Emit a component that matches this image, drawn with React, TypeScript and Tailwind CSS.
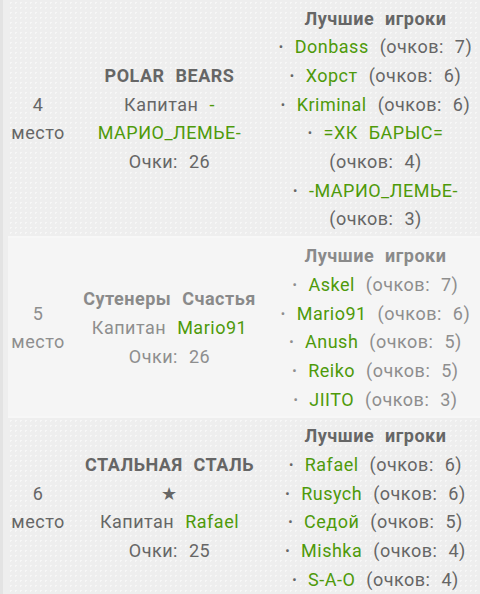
import React from 'react'

type Player = { name: string; pts: number; wrap?: boolean }
type Team = {
  place: number
  name: string
  star?: boolean
  captain: string
  captainWrap?: boolean
  points: number
  players: Player[]
  dim?: boolean
}

const teams: Team[] = [
  {
    place: 4,
    name: 'POLAR BEARS',
    captain: '-МАРИО_ЛЕМЬЕ-',
    captainWrap: true,
    points: 26,
    players: [
      { name: 'Donbass', pts: 7 },
      { name: 'Хорст', pts: 6 },
      { name: 'Kriminal', pts: 6 },
      { name: '=ХК БАРЫС=', pts: 4, wrap: true },
      { name: '-МАРИО_ЛЕМЬЕ-', pts: 3, wrap: true },
    ],
  },
  {
    place: 5,
    name: 'Сутенеры Счастья',
    captain: 'Mario91',
    points: 26,
    dim: true,
    players: [
      { name: 'Askel', pts: 7 },
      { name: 'Mario91', pts: 6 },
      { name: 'Anush', pts: 5 },
      { name: 'Reiko', pts: 5 },
      { name: 'JIITO', pts: 3 },
    ],
  },
  {
    place: 6,
    name: 'СТАЛЬНАЯ СТАЛЬ',
    star: true,
    captain: 'Rafael',
    points: 25,
    players: [
      { name: 'Rafael', pts: 6 },
      { name: 'Rusych', pts: 6 },
      { name: 'Седой', pts: 5 },
      { name: 'Mishka', pts: 4 },
      { name: 'S-A-O', pts: 4 },
    ],
  },
]

const dotted =
  'bg-[#eeeeee] bg-[radial-gradient(#f7f7f7_1px,transparent_1px)] bg-[size:5px_5px]'

function TeamRow({ team }: { team: Team }) {
  const text = team.dim ? 'text-[#8e8e8e]' : 'text-[#666666]'
  const head = team.dim ? 'text-[#8a8a8a]' : 'text-[#666666]'
  const bg = team.dim ? 'bg-[#f5f5f5]' : dotted

  return (
    <div className={`flex shrink-0 items-center pt-[4.5px] pb-[1.5px] ${bg} ${text}`}>
      <div className="w-[60px] shrink-0 text-center">
        <div>{team.place}</div>
        <div>место</div>
      </div>

      <div className="w-[203px] shrink-0 text-center">
        <div className={`font-bold ${head}`}>{team.name}</div>
        {team.star && <div>★</div>}
        {team.captainWrap ? (
          <>
            <div>
              Капитан <span className="text-[#4e9a0a]">-</span>
            </div>
            <div className="text-[#4e9a0a]">{team.captain.slice(1)}</div>
          </>
        ) : (
          <div>
            Капитан <span className="text-[#4e9a0a]">{team.captain}</span>
          </div>
        )}
        <div>Очки: {team.points}</div>
      </div>

      <div className="flex-1 text-center">
        <div className={`font-bold ${head}`}>Лучшие игроки</div>
        {team.players.map((p) => (
          <React.Fragment key={p.name}>
            <div>
              <span className="text-[13px] align-[2px]">•</span>{' '}
              <span className="text-[#4e9a0a]">{p.name}</span>
              {!p.wrap && <> (очков: {p.pts})</>}
            </div>
            {p.wrap && <div>(очков: {p.pts})</div>}
          </React.Fragment>
        ))}
      </div>
    </div>
  )
}

export default function App() {
  return (
    <div
      className="h-[594px] w-[480px] overflow-hidden bg-[#f7f7f7] border-l-[3px] border-[#e3e3e3] text-[18px] leading-[28.7px] tracking-[0.5px] [word-spacing:6px]"
      style={{ fontFamily: 'Roboto, "Noto Sans", sans-serif' }}
    >
      <div className="flex h-full flex-col gap-[2px] border-l-[5px] border-[#eeeeee]">
        {teams.map((t) => (
          <TeamRow key={t.place} team={t} />
        ))}
      </div>
    </div>
  )
}
